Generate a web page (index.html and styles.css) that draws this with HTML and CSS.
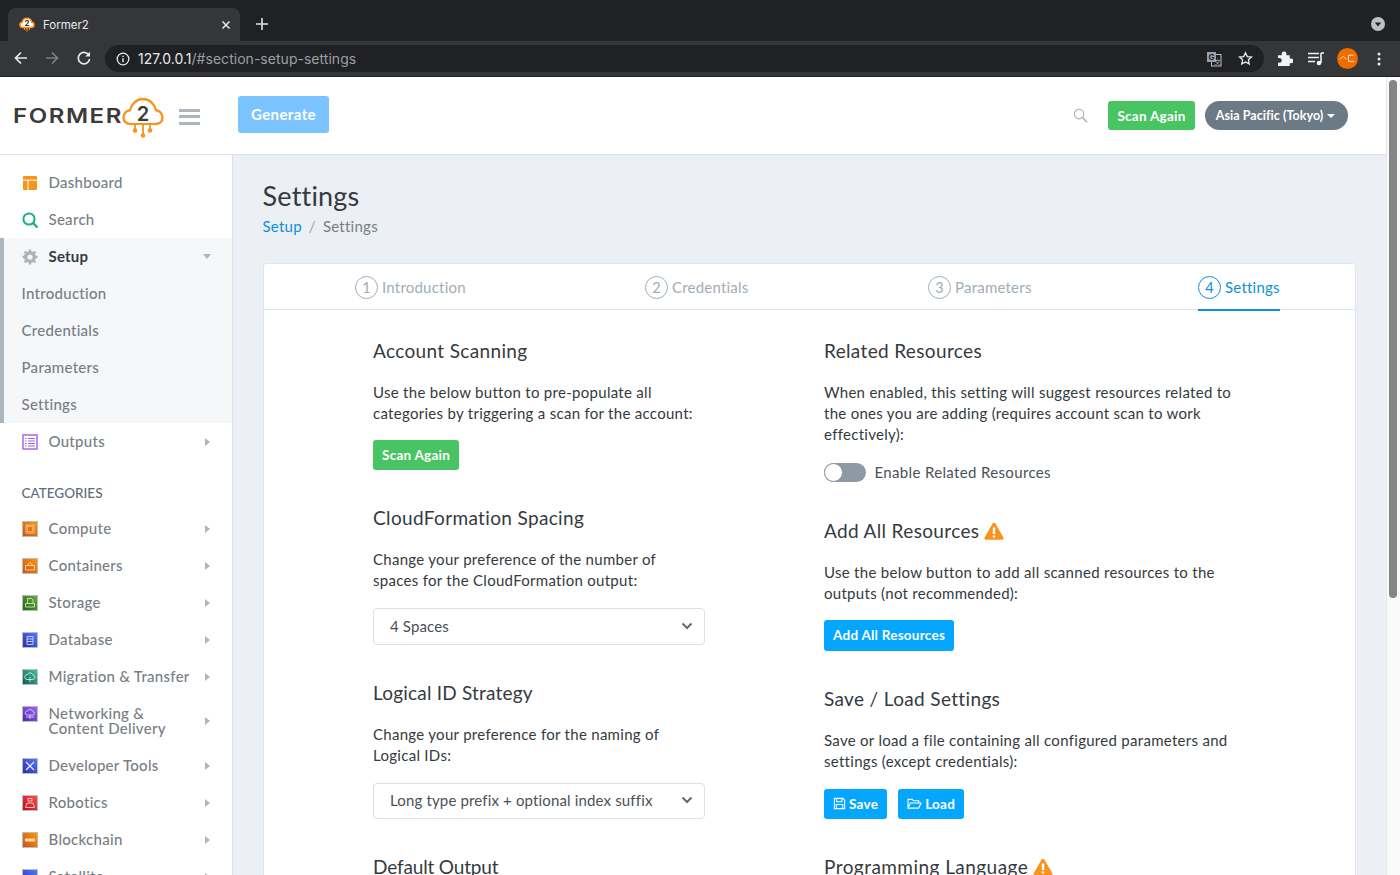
FILE: index.html
```html
<!DOCTYPE html>
<html lang="en">
<head>
<meta charset="utf-8">
<title>Former2</title>
<link rel="stylesheet" href="styles.css">
</head>
<body>
<div class="browser">
  <div class="tabstrip">
    <div class="tab">
      <svg class="favicon" viewBox="0 0 16 16"><path d="M4 10.500C1.800 10.500 1 9 1 7.800 1 6.300 2.200 5.300 3.300 5.200 3.700 3 5.700 1.300 8 1.300c2.300 0 4.200 1.600 4.700 3.900 1.300.1 2.300 1.300 2.300 2.600 0 1.500-1.100 2.700-2.900 2.700z" fill="#fff" stroke="#f7931e" stroke-width="1.600"/><path d="M5.500 11v2M8 11v3.500M10.500 11v2" stroke="#f7931e" stroke-width="1.200"/><text x="8" y="9.300" text-anchor="middle" class="fav-two">2</text></svg>
      <span class="tab-title">Former2</span>
      <svg class="tab-close" viewBox="0 0 10 10"><path d="M1.500 1.500l7 7M8.500 1.500l-7 7" stroke="#e8eaed" stroke-width="1.500"/></svg>
    </div>
    <svg class="new-tab" viewBox="0 0 12 12"><path d="M6 0v12M0 6h12" stroke="#dfe1e5" stroke-width="1.600"/></svg>
    <svg class="tab-search" viewBox="0 0 14 14"><circle cx="7" cy="7" r="7" fill="#bdc1c6"/><path d="M3.800 5.500h6.400L7 9.500z" fill="#202124"/></svg>
  </div>
  <div class="toolbar">
    <svg class="nav-icon" viewBox="0 0 16 16"><path d="M14 8H3M8 2.500L2.500 8 8 13.500" fill="none" stroke="#e8eaed" stroke-width="1.700"/></svg>
    <svg class="nav-icon" viewBox="0 0 16 16"><path d="M2 8h11M8 2.500L13.500 8 8 13.500" fill="none" stroke="#7c7f84" stroke-width="1.700"/></svg>
    <svg class="nav-icon nav-reload" viewBox="0 0 16 16"><path d="M13 5.500A5.700 5.700 0 1 0 13.600 9" fill="none" stroke="#e8eaed" stroke-width="1.700"/><path d="M14 1.800V6.600H9.200z" fill="#e8eaed"/></svg>
    <div class="urlbar">
      <svg class="info" viewBox="0 0 14 14"><circle cx="7" cy="7" r="5.800" fill="none" stroke="#e8eaed" stroke-width="1.300"/><path d="M7 6.200v4M7 3.700v1.300" stroke="#e8eaed" stroke-width="1.400"/></svg>
      <span class="url"><span class="url-host">127.0.0.1</span>/#section-setup-settings</span>
      <svg class="translate" viewBox="0 0 16 16"><rect x="5.500" y="3.500" width="9.500" height="11.500" fill="none" stroke="#bdc1c6"/><rect x="1" y="1" width="9" height="10" fill="#9aa0a6"/><text x="5.500" y="9" text-anchor="middle" class="tr-g">G</text><text x="11.500" y="13" text-anchor="middle" class="tr-a">文</text></svg>
      <svg class="star" viewBox="0 0 16 16"><path d="M8 1.800l1.900 4.100 4.500.5-3.300 3 .9 4.400L8 11.600l-4 2.200.9-4.400-3.300-3 4.500-.5z" fill="none" stroke="#e8eaed" stroke-width="1.400"/></svg>
    </div>
    <svg class="ext puzzle" viewBox="0 0 16 16"><path d="M0 4.500h4V3a2.500 2.500 0 0 1 5 0v1.500h3.500V8H14a2.500 2.500 0 0 1 0 5h-1.500v3H0v-3.500h1.500a2.500 2.500 0 0 0 0-5H0z" fill="#f1f3f4"/></svg>
    <svg class="ext media" viewBox="0 0 16 14"><path d="M0 1.500h11M0 5.500h11M0 9.500h7" stroke="#f1f3f4" stroke-width="1.600"/><path d="M13 1v10" stroke="#f1f3f4" stroke-width="1.600"/><path d="M13 1h3" stroke="#f1f3f4" stroke-width="1.600"/><circle cx="11" cy="11" r="2.300" fill="#f1f3f4"/></svg>
    <div class="avatar"><svg viewBox="0 0 22 22"><path d="M3 12l3.500-3.500L10 12M12 7.500h6M12 14h6M12 7.500v6.500" fill="none" stroke="#ffe3c7" stroke-width="1"/></svg></div>
    <svg class="kebab" viewBox="0 0 4 14"><circle cx="2" cy="2" r="1.500" fill="#e8eaed"/><circle cx="2" cy="7" r="1.500" fill="#e8eaed"/><circle cx="2" cy="12" r="1.500" fill="#e8eaed"/></svg>
  </div>
</div>

<div class="page">
  <div class="app">
    <header class="topbar">
      <div class="logo">
        <span class="logo-word">FORMER</span>
        <svg class="logo-cloud" viewBox="0 0 42 42"><path d="M9 27C4 27 1.500 24 1.500 20.500c0-4 3-7 6.500-7.300C9.300 7 14.500 2 21 2c6.500 0 11.700 5 13 11.200 3.500.3 6.500 3.300 6.500 7.300 0 3.500-2.500 6.500-7.500 6.500" fill="none" stroke="#f7931e" stroke-width="2.400"/><path d="M9 27h24" stroke="#f7931e" stroke-width="2"/><path d="M13 27v6M21 27v11M28 27v6" fill="none" stroke="#f7931e" stroke-width="1.800"/><circle cx="13" cy="33.500" r="2.300" fill="#f7931e"/><circle cx="21" cy="38.500" r="2.300" fill="#f7931e"/><circle cx="28" cy="33.500" r="2.300" fill="#f7931e"/><text x="21" y="23.500" text-anchor="middle" class="logo-two">2</text></svg>
      </div>
      <div class="burger"><i></i><i></i><i></i></div>
      <button class="btn btn-generate">Generate</button>
      <div class="topbar-right">
        <svg class="search-glass" viewBox="0 0 16 16"><circle cx="6.500" cy="6.500" r="5" fill="none" stroke="#adb5bd" stroke-width="1.300"/><path d="M10.200 10.200l4.800 4.800" stroke="#adb5bd" stroke-width="1.700"/></svg>
        <button class="btn btn-green btn-top">Scan Again</button>
        <button class="pill">Asia Pacific (Tokyo) <span class="caret-down"></span></button>
      </div>
    </header>
    <div class="layout">
      <nav class="sidebar">
        <a class="item"><svg class="ico" viewBox="0 0 16 16"><rect x="1" y="1" width="14" height="14" rx="1" fill="#f7941e"/><path d="M1 5.200h14M6 5.200V15" stroke="#fff" stroke-width="1"/></svg><span class="label">Dashboard</span></a>
        <a class="item"><svg class="ico" viewBox="0 0 16 16"><circle cx="7" cy="7" r="5.600" fill="none" stroke="#1caf8c" stroke-width="2"/><path d="M11 11l4.500 4.500" stroke="#1caf8c" stroke-width="2.300"/></svg><span class="label">Search</span></a>
        <div class="group">
          <a class="item item-open"><svg class="ico" viewBox="0 0 16 16"><circle cx="8" cy="8" r="4.300" fill="none" stroke="#a9b4bd" stroke-width="3.400"/><path d="M8 .5v3M8 12.500v3M.5 8h3M12.500 8h3M2.700 2.700l2.100 2.100M11.200 11.200l2.100 2.100M13.300 2.700l-2.100 2.100M4.800 11.200l-2.100 2.100" stroke="#a9b4bd" stroke-width="2.400"/></svg><span class="label">Setup</span><span class="arrow-down"></span></a>
          <a class="sub">Introduction</a>
          <a class="sub">Credentials</a>
          <a class="sub">Parameters</a>
          <a class="sub">Settings</a>
        </div>
        <a class="item"><svg class="ico" viewBox="0 0 16 16"><rect x="1" y="1" width="14" height="14" fill="#fff" stroke="#a25ee8" stroke-width="1.400"/><path d="M3 4.500h1.500M6 4.500h7M3 7h1.500M6 7h7M3 9.500h1.500M6 9.500h7M3 12h1.500M6 12h7" stroke="#a25ee8" stroke-width="1"/></svg><span class="label">Outputs</span><span class="arrow-right"></span></a>
        <div class="nav-heading">CATEGORIES</div>
        <a class="item"><svg class="cat" viewBox="0 0 16 16"><defs><linearGradient id="g-or" x1="0" y1="1" x2="1" y2="0"><stop offset="0" stop-color="#c8511b"/><stop offset="1" stop-color="#f90"/></linearGradient></defs><rect x=".5" y=".5" width="15" height="15" fill="url(#g-or)" stroke="#b9bec3"/><rect x="4" y="4" width="8" height="8" fill="none" stroke="#ffd9a8" stroke-width=".8"/><rect x="5.500" y="5.500" width="5" height="5" fill="none" stroke="#ffd9a8" stroke-width=".6"/></svg><span class="label">Compute</span><span class="arrow-right"></span></a>
        <a class="item"><svg class="cat" viewBox="0 0 16 16"><rect x=".5" y=".5" width="15" height="15" fill="url(#g-or)" stroke="#b9bec3"/><path d="M3.500 7.500h9v4.500h-9zM5 7.500L8 4.500l3 3" fill="none" stroke="#ffe2bf" stroke-width=".8"/></svg><span class="label">Containers</span><span class="arrow-right"></span></a>
        <a class="item"><svg class="cat" viewBox="0 0 16 16"><defs><linearGradient id="g-gr" x1="0" y1="1" x2="1" y2="0"><stop offset="0" stop-color="#1b660f"/><stop offset="1" stop-color="#6cae3e"/></linearGradient></defs><rect x=".5" y=".5" width="15" height="15" fill="url(#g-gr)" stroke="#b9bec3"/><path d="M5.500 8V3.500h4L11 5v3M3.500 8.500h9v3.500h-9z" fill="none" stroke="#e4f3d6" stroke-width=".8"/></svg><span class="label">Storage</span><span class="arrow-right"></span></a>
        <a class="item"><svg class="cat" viewBox="0 0 16 16"><defs><linearGradient id="g-bl" x1="0" y1="1" x2="1" y2="0"><stop offset="0" stop-color="#2e27ad"/><stop offset="1" stop-color="#527fff"/></linearGradient></defs><rect x=".5" y=".5" width="15" height="15" fill="url(#g-bl)" stroke="#b9bec3"/><path d="M5 4.500h6v8H5zM5 7h6M5 9.500h6" fill="none" stroke="#dfe5ff" stroke-width=".8"/></svg><span class="label">Database</span><span class="arrow-right"></span></a>
        <a class="item"><svg class="cat" viewBox="0 0 16 16"><defs><linearGradient id="g-te" x1="0" y1="1" x2="1" y2="0"><stop offset="0" stop-color="#055f4e"/><stop offset="1" stop-color="#56c0a7"/></linearGradient></defs><rect x=".5" y=".5" width="15" height="15" fill="url(#g-te)" stroke="#b9bec3"/><path d="M5 10.500a2.500 2.500 0 0 1 .5-5A3 3 0 0 1 11 6a2.300 2.300 0 0 1 0 4.500zM8 8v5" fill="none" stroke="#d9f5ee" stroke-width=".8"/></svg><span class="label">Migration &amp; Transfer</span><span class="arrow-right"></span></a>
        <a class="item item-tall"><svg class="cat" viewBox="0 0 16 16"><defs><linearGradient id="g-pu" x1="0" y1="1" x2="1" y2="0"><stop offset="0" stop-color="#4d27a8"/><stop offset="1" stop-color="#a166ff"/></linearGradient></defs><rect x=".5" y=".5" width="15" height="15" fill="url(#g-pu)" stroke="#b9bec3"/><path d="M5 9a2 2 0 0 1 .5-4A3 3 0 0 1 11 5.500 1.800 1.800 0 0 1 11 9zM4 11h8M8 9v4" fill="none" stroke="#eadfff" stroke-width=".8"/></svg><span class="label">Networking &amp;<br>Content Delivery</span><span class="arrow-right"></span></a>
        <a class="item"><svg class="cat" viewBox="0 0 16 16"><rect x=".5" y=".5" width="15" height="15" fill="url(#g-bl)" stroke="#b9bec3"/><path d="M4 4l8 8M12 4l-8 8" stroke="#dfe5ff" stroke-width="1.400"/></svg><span class="label">Developer Tools</span><span class="arrow-right"></span></a>
        <a class="item"><svg class="cat" viewBox="0 0 16 16"><defs><linearGradient id="g-re" x1="0" y1="1" x2="1" y2="0"><stop offset="0" stop-color="#bd0816"/><stop offset="1" stop-color="#ff5252"/></linearGradient></defs><rect x=".5" y=".5" width="15" height="15" fill="url(#g-re)" stroke="#b9bec3"/><path d="M6 6h4V3.500H6zM3.500 12.500L5 8h6l1.500 4.500z" fill="none" stroke="#ffe1e1" stroke-width=".8"/></svg><span class="label">Robotics</span><span class="arrow-right"></span></a>
        <a class="item"><svg class="cat" viewBox="0 0 16 16"><rect x=".5" y=".5" width="15" height="15" fill="url(#g-or)" stroke="#b9bec3"/><rect x="3" y="6.500" width="10" height="3" fill="#ffd9a8"/></svg><span class="label">Blockchain</span><span class="arrow-right"></span></a>
        <a class="item"><svg class="cat" viewBox="0 0 16 16"><rect x=".5" y=".5" width="15" height="15" fill="url(#g-bl)" stroke="#b9bec3"/></svg><span class="label">Satellite</span><span class="arrow-right"></span></a>
      </nav>
      <main class="content">
        <h1 class="page-title">Settings</h1>
        <div class="crumbs"><a class="crumb-link">Setup</a><span class="crumb-sep">/</span><span class="crumb-cur">Settings</span></div>
        <section class="card">
          <div class="steps">
            <div class="step"><span class="num">1</span>Introduction</div>
            <div class="step"><span class="num">2</span>Credentials</div>
            <div class="step"><span class="num">3</span>Parameters</div>
            <div class="step step-active"><span class="num">4</span>Settings</div>
          </div>
          <div class="card-body">
            <div class="col">
              <div class="block">
                <h4>Account Scanning</h4>
                <p>Use the below button to pre-populate all<br>categories by triggering a scan for the account:</p>
                <button class="btn btn-green btn-form btn-scan">Scan Again</button>
              </div>
              <div class="block">
                <h4>CloudFormation Spacing</h4>
                <p>Change your preference of the number of<br>spaces for the CloudFormation output:</p>
                <div class="select">4 Spaces<svg class="chev" viewBox="0 0 12 8"><path d="M1.500 1.500L6 6l4.500-4.500" fill="none" stroke="#5b6b7b" stroke-width="2"/></svg></div>
              </div>
              <div class="block">
                <h4 class="h-logical">Logical ID Strategy</h4>
                <p>Change your preference for the naming of<br>Logical IDs:</p>
                <div class="select">Long type prefix + optional index suffix<svg class="chev" viewBox="0 0 12 8"><path d="M1.500 1.500L6 6l4.500-4.500" fill="none" stroke="#5b6b7b" stroke-width="2"/></svg></div>
              </div>
              <div class="block">
                <h4 class="h-default">Default Output</h4>
              </div>
            </div>
            <div class="col">
              <div class="block">
                <h4>Related Resources</h4>
                <p>When enabled, this setting will suggest resources related to<br>the ones you are adding (requires account scan to work<br>effectively):</p>
                <div class="toggle-row"><span class="toggle"><span class="knob"></span></span><span class="toggle-label">Enable Related Resources</span></div>
              </div>
              <div class="block">
                <h4>Add All Resources <svg class="warn" viewBox="0 0 20 18"><path d="M10 .8c.6 0 1.100.3 1.400.8l8 14c.6 1-.1 2.200-1.300 2.200H1.900C.7 17.800 0 16.600.6 15.600l8-14c.3-.5.8-.8 1.400-.8z" fill="#f7941e"/><path d="M10 5.500v6.500M10 13.500v2" stroke="#fff" stroke-width="2.400"/></svg></h4>
                <p>Use the below button to add all scanned resources to the<br>outputs (not recommended):</p>
                <button class="btn btn-blue btn-form">Add All Resources</button>
              </div>
              <div class="block">
                <h4>Save / Load Settings</h4>
                <p>Save or load a file containing all configured parameters and<br>settings (except credentials):</p>
                <div class="btn-row">
                  <button class="btn btn-blue btn-form"><svg class="btn-ico" viewBox="0 0 14 14"><path d="M1.500 1.500h9l2 2v9h-11z" fill="none" stroke="#fff" stroke-width="1.200"/><path d="M4 1.500v3.500h5.500v-3.500M3.500 12.500V8h7v4.500" fill="none" stroke="#fff" stroke-width="1.100"/></svg>Save</button>
                  <button class="btn btn-blue btn-form"><svg class="btn-ico btn-ico-wide" viewBox="0 0 16 14"><path d="M1 12V2.500h4.500L7 4h5.500v2.500M1 12l2.500-5.500H15L12.500 12z" fill="none" stroke="#fff" stroke-width="1.200"/></svg>Load</button>
                </div>
              </div>
              <div class="block">
                <h4 class="h-prog">Programming Language <svg class="warn" viewBox="0 0 20 18"><path d="M10 .8c.6 0 1.100.3 1.400.8l8 14c.6 1-.1 2.200-1.300 2.200H1.900C.7 17.800 0 16.600.6 15.600l8-14c.3-.5.8-.8 1.400-.8z" fill="#f7941e"/><path d="M10 5.500v6.500M10 13.500v2" stroke="#fff" stroke-width="2.400"/></svg></h4>
              </div>
            </div>
          </div>
        </section>
      </main>
    </div>
  </div>
  <div class="scrollbar"><div class="thumb"></div></div>
</div>
</body>
</html>
```

FILE: styles.css
```css
* { box-sizing: border-box; }
html, body { margin: 0; height: 100%; overflow: hidden; }
body {
  width: 1400px; height: 875px;
  font-family: "Lato", "Liberation Sans", sans-serif;
  font-size: 15px; color: #343a40; background: #fff;
  display: flex; flex-direction: column;
}
button { font-family: inherit; border: 0; cursor: pointer; }

/* browser chrome */
.browser { flex: none; height: 77px; background: #202124; font-family: "Inter", "Liberation Sans", sans-serif; }
.tabstrip { height: 41px; padding: 8px 0 0 8px; display: flex; align-items: flex-start; }
.tab { width: 232px; height: 33px; background: #35363a; border-radius: 8px 8px 0 0; display: flex; align-items: center; padding: 0 9px 0 11px; }
.favicon { width: 16px; height: 16px; flex: none; }
.fav-two { font: 700 8px "Inter", sans-serif; fill: #333; }
.tab-title { flex: 1; margin-left: 8px; color: #e8eaed; font-size: 11.500px; }
.tab-close { width: 10px; height: 10px; }
.new-tab { width: 12px; height: 12px; margin: 10px 0 0 16px; }
.tab-search { width: 14px; height: 14px; margin: 9px 15px 0 auto; }
.toolbar { height: 35px; background: #35363a; display: flex; align-items: center; padding: 0 13px 0 13px; }
.nav-icon { width: 16px; height: 16px; margin: 0 15px 1px 0; flex: none; }
.nav-reload { margin: 0 13px 1px 1px; }
.urlbar { width: 1159px; height: 27px; border-radius: 14px; background: #202124; display: flex; align-items: center; padding: 0 11px 0 11px; }
.info { width: 14px; height: 14px; flex: none; }
.url { margin-left: 8px; flex: 1; padding-bottom: 1px; color: #9aa0a6; font-size: 14px; letter-spacing: .03px; }
.url-host { color: #e8eaed; }
.translate { width: 16px; height: 16px; margin-right: 16px; }
.tr-g { font: 700 8px "Inter", sans-serif; fill: #202124; }
.tr-a { font: 6px "Noto Sans CJK SC", sans-serif; fill: #bdc1c6; }
.star { width: 15px; height: 15px; }
.ext { flex: none; }
.puzzle { width: 15px; height: 15px; margin-left: 14px; }
.media { width: 16px; height: 14px; margin-left: 15px; }
.avatar { width: 21px; height: 21px; border-radius: 50%; background: #ee6c00; margin-left: 13px; flex: none; }
.avatar svg { display: block; width: 21px; height: 21px; }
.kebab { width: 4px; height: 14px; margin-left: 19px; flex: none; }

/* page */
.page { flex: 1; display: flex; min-height: 0; }
.app { flex: 1; min-width: 0; display: flex; flex-direction: column; }
.topbar { flex: none; height: 78px; background: #fff; border-bottom: 1px solid #d9e2ea; display: flex; align-items: center; padding: 0 38px 0 14px; }
.logo { display: flex; align-items: center; width: 150px; height: 45px; }
.logo-word { font-family: "Inter", sans-serif; font-weight: 600; font-size: 20px; letter-spacing: 1.3px; color: #3b3b3b; width: 109px; margin-left: -1px; margin-right: 1px; transform: scaleX(1.2); transform-origin: left center; }
.logo-cloud { width: 42px; height: 42px; flex: none; margin: 5px 0 0 -1px; }
.logo-two { font: 600 20px "Inter", sans-serif; fill: #3b3b3b; }
.burger { width: 21px; margin: 2px 0 0 15px; display: flex; flex-direction: column; gap: 3.500px; }
.burger i { display: block; height: 3px; background: #adb5bd; }
.btn { display: inline-flex; align-items: center; justify-content: center; border-radius: 3px; color: #fff; font-weight: 700; white-space: nowrap; letter-spacing: .25px; }
.btn-generate { margin: 0 0 2px 38px; width: 91px; height: 37px; padding-bottom: 2px; background: #7cc4ff; font-size: 15px; letter-spacing: .4px; }
.topbar-right { margin-left: auto; display: flex; align-items: center; }
.search-glass { width: 15px; height: 15px; margin-right: 20px; }
.btn-green { background: #48c463; }
.btn-blue { background: #05a6ff; }
.btn-top { width: 87px; height: 29px; padding-bottom: 1px; font-size: 13.500px; }
.pill { margin-left: 10px; width: 143px; height: 29px; border-radius: 15px; padding-right: 8px; background: #6c7a86; color: #fff; font-size: 12.500px; letter-spacing: .06px; font-weight: 700; display: inline-flex; align-items: center; justify-content: center; gap: 4px; }
.caret-down { width: 0; height: 0; border: 4px solid transparent; border-top: 4.500px solid #fff; border-bottom: 0; }
.layout { flex: 1; display: flex; min-height: 0; }

/* sidebar */
.sidebar { width: 233px; flex: none; background: #fff; border-right: 1px solid #d9e2ea; padding-top: 9px; overflow: hidden; }
.item { display: flex; align-items: center; min-height: 37px; padding: 0 21px 0 22px; color: #777e85; font-size: 15px; font-weight: 500; letter-spacing: .28px; line-height: 15px; }
.ico, .cat { width: 16px; height: 16px; flex: none; margin-right: 10.500px; }
.item-tall { min-height: 52px; }
.item-tall .cat { align-self: flex-start; margin-top: 11px; }
.label { flex: 1; }
.group { background: #f5f7f9; box-shadow: inset 4px 0 0 #adb5bd; }
.item-open .label { color: #343a40; font-weight: 700; letter-spacing: .2px; }
.sub { display: flex; align-items: center; height: 37px; padding: 0 0 2px 21.500px; color: #777e85; font-size: 15px; font-weight: 500; letter-spacing: .28px; }
.arrow-down { width: 0; height: 0; border: 4px solid transparent; border-top: 5px solid #adb5bd; border-bottom: 0; }
.arrow-right { width: 0; height: 0; margin-right: 1px; border: 4px solid transparent; border-left: 5px solid #adb5bd; border-right: 0; }
.nav-heading { margin: 23px 0 0 21.500px; height: 27px; color: #5d6d7e; font-size: 13.500px; font-weight: 500; line-height: 20px; }

/* content */
.content { flex: 1; min-width: 0; background: #eceff4; padding: 0 30px; overflow: hidden; }
.page-title { margin: 25px 0 0 -.5px; font-size: 27px; font-weight: 400; line-height: 32px; letter-spacing: .2px; color: #343a40; }
.crumbs { margin: 2px 0 0 -.5px; height: 24px; line-height: 24px; font-size: 15px; letter-spacing: .25px; color: #777e85; }
.crumb-link { color: #0e8fd8; }
.crumb-sep { margin: 0 7px; color: #9aa3ab; }
.card { margin-top: 25px; background: #fff; border: 1px solid #e1e6ec; border-radius: 3px 3px 0 0; }
.steps { height: 46px; display: grid; grid-template-columns: 290px 283px 270px auto; padding-left: 91px; border-bottom: 1px solid #d9e2ea; justify-content: start; }
.step { display: flex; align-items: center; height: 47px; padding-bottom: 1px; color: #a0adb8; font-size: 15px; letter-spacing: .22px; justify-self: start; }
.num { width: 23px; height: 23px; margin-right: 4px; border: 1px solid #a0adb8; border-radius: 50%; display: flex; align-items: center; justify-content: center; font-size: 14.500px; }
.step-active { color: #0e8fd8; box-shadow: inset 0 -2px 0 #0e8fd8; }
.step-active .num { border-color: #0e8fd8; }
.card-body { display: grid; grid-template-columns: 451px 440px; padding: 29px 0 0 109px; }
.block { margin-bottom: 36px; }
h4 { margin: 0; display: flex; align-items: center; gap: 5px; font-size: 19px; font-weight: 400; line-height: 24px; letter-spacing: .35px; color: #343a40; }
.h-logical { letter-spacing: .2px; }
.h-default { letter-spacing: -.15px; }
.h-prog { letter-spacing: .45px; }
p { margin: 19px 0 16px; font-size: 15px; line-height: 21px; letter-spacing: .29px; color: #343a40; white-space: nowrap; }
.btn-form { height: 30.500px; padding: 0 9px; font-size: 13.500px; }
.btn-scan { height: 30px; }
.btn-row { display: flex; gap: 11px; margin-top: 17px; }
.btn-ico { width: 13px; height: 13px; margin-right: 3px; }
.btn-ico-wide { width: 15px; }
.select { width: 332px; height: 36.500px; margin-top: 17px; border: 1px solid #d9e2ea; border-radius: 4px; display: flex; align-items: center; justify-content: space-between; padding: 0 11px 1px 16px; color: #4a5159; font-size: 15px; letter-spacing: .15px; }
.chev { width: 12px; height: 8px; }
.toggle-row { display: flex; align-items: center; margin: 17px 0 37px; height: 20px; gap: 8.500px; }
.toggle { width: 42px; height: 19px; border-radius: 10px; background: #8d99a5; display: block; }
.knob { display: block; width: 19px; height: 19px; border-radius: 50%; background: #fff; border: 1px solid #8d99a5; }
.toggle-label { color: #4a5159; letter-spacing: .35px; }
.warn { width: 20px; height: 18px; flex: none; }
.scrollbar { width: 14px; flex: none; background: #fafafa; border-left: 1px solid #e8e8e8; padding: 3px 3px 0 2px; }
.thumb { height: 518px; border-radius: 5px; background: #858585; }
```
